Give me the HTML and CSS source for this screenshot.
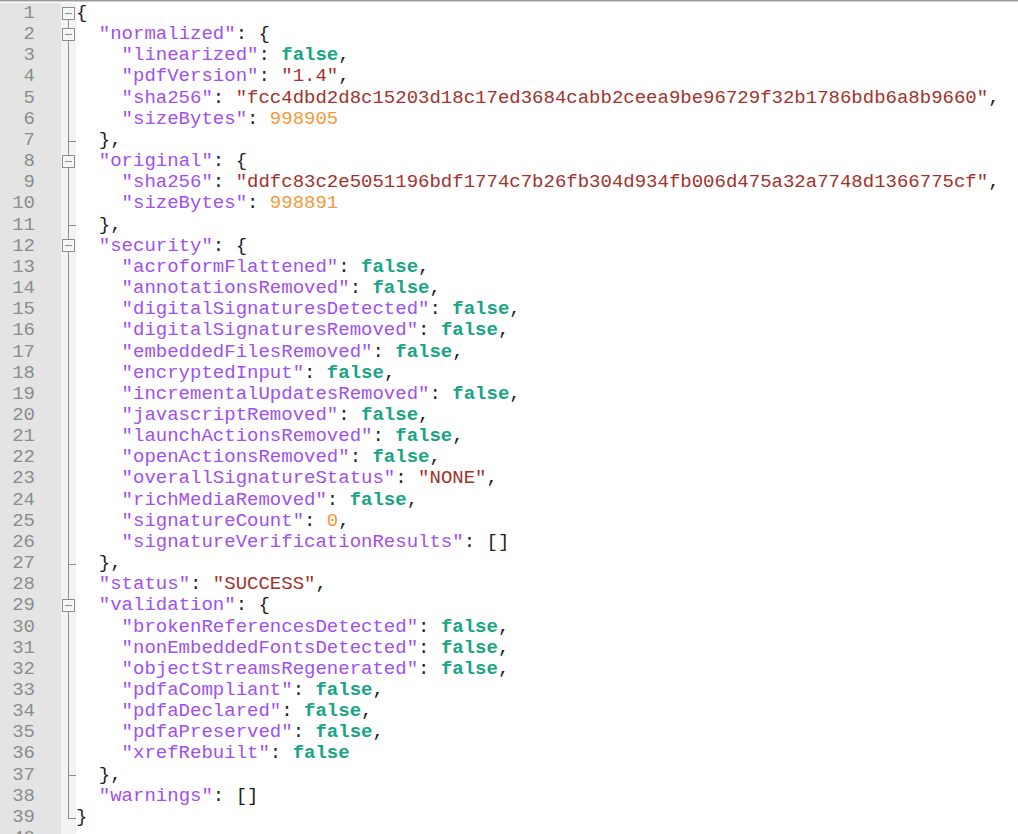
FILE: index.html
```html
<!DOCTYPE html>
<html>
<head>
<meta charset="utf-8">
<link rel="stylesheet" href="styles.css">
</head>
<body>
<div class="editor">
<div class="row"><span class="num">1</span><span class="fold box first"></span><span class="code"><span class="p">{</span></span></div>
<div class="row"><span class="num">2</span><span class="fold box"></span><span class="code">  <span class="k">"normalized"</span><span class="p">: {</span></span></div>
<div class="row"><span class="num">3</span><span class="fold v"></span><span class="code">    <span class="k">"linearized"</span><span class="p">: </span><span class="b">false</span><span class="p">,</span></span></div>
<div class="row"><span class="num">4</span><span class="fold v"></span><span class="code">    <span class="k">"pdfVersion"</span><span class="p">: </span><span class="s">"1.4"</span><span class="p">,</span></span></div>
<div class="row"><span class="num">5</span><span class="fold v"></span><span class="code">    <span class="k">"sha256"</span><span class="p">: </span><span class="s">"fcc4dbd2d8c15203d18c17ed3684cabb2ceea9be96729f32b1786bdb6a8b9660"</span><span class="p">,</span></span></div>
<div class="row"><span class="num">6</span><span class="fold v"></span><span class="code">    <span class="k">"sizeBytes"</span><span class="p">: </span><span class="n">998905</span></span></div>
<div class="row"><span class="num">7</span><span class="fold v tick"></span><span class="code">  <span class="p">},</span></span></div>
<div class="row"><span class="num">8</span><span class="fold box"></span><span class="code">  <span class="k">"original"</span><span class="p">: {</span></span></div>
<div class="row"><span class="num">9</span><span class="fold v"></span><span class="code">    <span class="k">"sha256"</span><span class="p">: </span><span class="s">"ddfc83c2e5051196bdf1774c7b26fb304d934fb006d475a32a7748d1366775cf"</span><span class="p">,</span></span></div>
<div class="row"><span class="num">10</span><span class="fold v"></span><span class="code">    <span class="k">"sizeBytes"</span><span class="p">: </span><span class="n">998891</span></span></div>
<div class="row"><span class="num">11</span><span class="fold v tick"></span><span class="code">  <span class="p">},</span></span></div>
<div class="row"><span class="num">12</span><span class="fold box"></span><span class="code">  <span class="k">"security"</span><span class="p">: {</span></span></div>
<div class="row"><span class="num">13</span><span class="fold v"></span><span class="code">    <span class="k">"acroformFlattened"</span><span class="p">: </span><span class="b">false</span><span class="p">,</span></span></div>
<div class="row"><span class="num">14</span><span class="fold v"></span><span class="code">    <span class="k">"annotationsRemoved"</span><span class="p">: </span><span class="b">false</span><span class="p">,</span></span></div>
<div class="row"><span class="num">15</span><span class="fold v"></span><span class="code">    <span class="k">"digitalSignaturesDetected"</span><span class="p">: </span><span class="b">false</span><span class="p">,</span></span></div>
<div class="row"><span class="num">16</span><span class="fold v"></span><span class="code">    <span class="k">"digitalSignaturesRemoved"</span><span class="p">: </span><span class="b">false</span><span class="p">,</span></span></div>
<div class="row"><span class="num">17</span><span class="fold v"></span><span class="code">    <span class="k">"embeddedFilesRemoved"</span><span class="p">: </span><span class="b">false</span><span class="p">,</span></span></div>
<div class="row"><span class="num">18</span><span class="fold v"></span><span class="code">    <span class="k">"encryptedInput"</span><span class="p">: </span><span class="b">false</span><span class="p">,</span></span></div>
<div class="row"><span class="num">19</span><span class="fold v"></span><span class="code">    <span class="k">"incrementalUpdatesRemoved"</span><span class="p">: </span><span class="b">false</span><span class="p">,</span></span></div>
<div class="row"><span class="num">20</span><span class="fold v"></span><span class="code">    <span class="k">"javascriptRemoved"</span><span class="p">: </span><span class="b">false</span><span class="p">,</span></span></div>
<div class="row"><span class="num">21</span><span class="fold v"></span><span class="code">    <span class="k">"launchActionsRemoved"</span><span class="p">: </span><span class="b">false</span><span class="p">,</span></span></div>
<div class="row"><span class="num">22</span><span class="fold v"></span><span class="code">    <span class="k">"openActionsRemoved"</span><span class="p">: </span><span class="b">false</span><span class="p">,</span></span></div>
<div class="row"><span class="num">23</span><span class="fold v"></span><span class="code">    <span class="k">"overallSignatureStatus"</span><span class="p">: </span><span class="s">"NONE"</span><span class="p">,</span></span></div>
<div class="row"><span class="num">24</span><span class="fold v"></span><span class="code">    <span class="k">"richMediaRemoved"</span><span class="p">: </span><span class="b">false</span><span class="p">,</span></span></div>
<div class="row"><span class="num">25</span><span class="fold v"></span><span class="code">    <span class="k">"signatureCount"</span><span class="p">: </span><span class="n">0</span><span class="p">,</span></span></div>
<div class="row"><span class="num">26</span><span class="fold v"></span><span class="code">    <span class="k">"signatureVerificationResults"</span><span class="p">: []</span></span></div>
<div class="row"><span class="num">27</span><span class="fold v tick"></span><span class="code">  <span class="p">},</span></span></div>
<div class="row"><span class="num">28</span><span class="fold v"></span><span class="code">  <span class="k">"status"</span><span class="p">: </span><span class="s">"SUCCESS"</span><span class="p">,</span></span></div>
<div class="row"><span class="num">29</span><span class="fold box"></span><span class="code">  <span class="k">"validation"</span><span class="p">: {</span></span></div>
<div class="row"><span class="num">30</span><span class="fold v"></span><span class="code">    <span class="k">"brokenReferencesDetected"</span><span class="p">: </span><span class="b">false</span><span class="p">,</span></span></div>
<div class="row"><span class="num">31</span><span class="fold v"></span><span class="code">    <span class="k">"nonEmbeddedFontsDetected"</span><span class="p">: </span><span class="b">false</span><span class="p">,</span></span></div>
<div class="row"><span class="num">32</span><span class="fold v"></span><span class="code">    <span class="k">"objectStreamsRegenerated"</span><span class="p">: </span><span class="b">false</span><span class="p">,</span></span></div>
<div class="row"><span class="num">33</span><span class="fold v"></span><span class="code">    <span class="k">"pdfaCompliant"</span><span class="p">: </span><span class="b">false</span><span class="p">,</span></span></div>
<div class="row"><span class="num">34</span><span class="fold v"></span><span class="code">    <span class="k">"pdfaDeclared"</span><span class="p">: </span><span class="b">false</span><span class="p">,</span></span></div>
<div class="row"><span class="num">35</span><span class="fold v"></span><span class="code">    <span class="k">"pdfaPreserved"</span><span class="p">: </span><span class="b">false</span><span class="p">,</span></span></div>
<div class="row"><span class="num">36</span><span class="fold v"></span><span class="code">    <span class="k">"xrefRebuilt"</span><span class="p">: </span><span class="b">false</span></span></div>
<div class="row"><span class="num">37</span><span class="fold v tick"></span><span class="code">  <span class="p">},</span></span></div>
<div class="row"><span class="num">38</span><span class="fold v"></span><span class="code">  <span class="k">"warnings"</span><span class="p">: []</span></span></div>
<div class="row"><span class="num">39</span><span class="fold end"></span><span class="code"><span class="p">}</span></span></div>
<div class="row"><span class="num">40</span><span class="fold"></span><span class="code"></span></div>
</div>
</body>
</html>
```
FILE: styles.css
```css
html, body {
  margin: 0;
  padding: 0;
  background: #ffffff;
  overflow: hidden;
}
body {
  height: 834px;
  border-top: 1px solid #9a9a9a;
  box-shadow: inset 0 1px 0 #cfcfcf;
  padding-top: 2px;
  box-sizing: border-box;
}
.editor {
  display: flex;
  flex-direction: column;
  font-family: "Liberation Mono", "Courier New", monospace;
  font-size: 19px;
}
.row {
  display: flex;
  height: 21.16px;
  line-height: 21.16px;
  white-space: pre;
}
.num {
  width: 61px;
  flex: none;
  box-sizing: border-box;
  padding-right: 26px;
  text-align: right;
  background: #e4e4e4;
  color: #8c8c8c;
}
.fold {
  width: 15px;
  flex: none;
  background: #f3f3f3;
  position: relative;
}
.code {
  flex: 1;
  color: #222;
}
.k { color: #a04ff0; }
.s { color: #a3322c; }
.b { color: #17a583; font-weight: bold; }
.n { color: #f7993a; }
.p { color: #1e1e1e; }

.fold.v::before,
.fold.box::before,
.fold.end::before {
  content: "";
  position: absolute;
  left: 7px;
  width: 1px;
  top: 0;
  bottom: 0;
  background: #8e8e8e;
}
.fold.box.first::before {
  top: 50%;
}
.fold.box::after {
  content: "";
  position: absolute;
  left: 1px;
  top: calc(50% - 7px);
  width: 13px;
  height: 13px;
  box-sizing: border-box;
  border: 1px solid #8e8e8e;
  background: linear-gradient(#8e8e8e, #8e8e8e) center / 7px 1px no-repeat, #f7f7f7;
}
.fold.tick::after {
  content: "";
  position: absolute;
  left: 7px;
  width: 8px;
  top: 50%;
  height: 1px;
  background: #8e8e8e;
}
.fold.end::before {
  bottom: 50%;
}
.fold.end::after {
  content: "";
  position: absolute;
  left: 7px;
  width: 8px;
  top: 50%;
  height: 1px;
  background: #8e8e8e;
}
```
